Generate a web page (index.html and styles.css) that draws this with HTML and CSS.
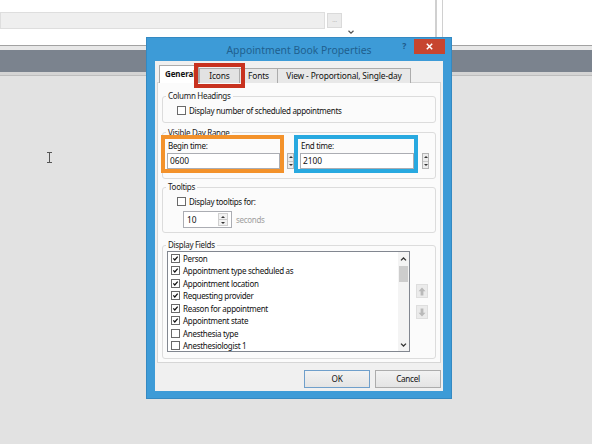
FILE: index.html
```html
<!DOCTYPE html>
<html lang="en">
<head>
<meta charset="utf-8">
<title>Appointment Book Properties</title>
<link rel="stylesheet" href="styles.css">
</head>
<body>
<div class="app">
  <div class="toolstrip">
    <div class="path-col">
      <div class="path-field"></div>
      <div class="browse-btn">…</div>
    </div>
    <div class="scroll-col">
      <svg class="chev" width="6" height="4" viewBox="0 0 6 4"><path d="M0.5 0.8 L3 3.2 L5.5 0.8" /></svg>
    </div>
    <div class="split"></div>
  </div>
  <div class="rule"></div>
  <div class="band"></div>
  <div class="band-edge"></div>
  <div class="workspace">
    <svg class="ibeam" width="5" height="11" viewBox="0 0 5 11"><path d="M0 0.5 H5 M2.5 0.5 V10.5 M0 10.5 H5" /></svg>
  </div>
</div>

<div class="dialog">
  <div class="titlebar">
    <span></span>
    <span class="title">Appointment Book Properties</span>
    <div class="controls">
      <span class="help">?</span>
      <span class="close"><svg width="7" height="7" viewBox="0 0 7 7"><path d="M0.8 0.8 L6.2 6.2 M6.2 0.8 L0.8 6.2" /></svg></span>
    </div>
  </div>

  <div class="dlg-body">
    <div class="tabs">
      <span class="tab active">General</span>
      <span class="tab flagged">Icons</span>
      <span class="tab t-fonts">Fonts</span>
      <span class="tab t-view">View - Proportional, Single-day</span>
    </div>

    <div class="panel">
      <div class="group g-cols">
        <div class="group-title">Column Headings</div>
        <div class="check-row"><span class="cb"></span><span>Display number of scheduled appointments</span></div>
      </div>

      <div class="group g-range">
        <div class="group-title">Visible Day Range</div>
        <div class="range-row">
          <div class="time-field begin mark-orange">
            <div class="field-label">Begin time:</div>
            <div class="text-box">0600</div>
          </div>
          <span class="spin s-begin"><i class="up"></i><i class="dn"></i></span>
          <div class="time-field end mark-blue">
            <div class="field-label">End time:</div>
            <div class="text-box">2100</div>
          </div>
          <span class="spin s-end"><i class="up"></i><i class="dn"></i></span>
        </div>
      </div>

      <div class="group g-tips">
        <div class="group-title">Tooltips</div>
        <div class="check-row"><span class="cb"></span><span>Display tooltips for:</span></div>
        <div class="secs-row">
          <div class="num-box"><span class="num">10</span><span class="spin inset"><i class="up"></i><i class="dn"></i></span></div>
          <span class="muted">seconds</span>
        </div>
      </div>

      <div class="group g-fields">
        <div class="group-title">Display Fields</div>
        <div class="list-row">
          <div class="listbox">
            <div class="items">
              <div class="item"><span class="cb on"><svg viewBox="0 0 9 9"><path d="M1.7 4.4 L3.6 6.4 L7.3 2.2" /></svg></span>Person</div>
              <div class="item"><span class="cb on"><svg viewBox="0 0 9 9"><path d="M1.7 4.4 L3.6 6.4 L7.3 2.2" /></svg></span>Appointment type scheduled as</div>
              <div class="item"><span class="cb on"><svg viewBox="0 0 9 9"><path d="M1.7 4.4 L3.6 6.4 L7.3 2.2" /></svg></span>Appointment location</div>
              <div class="item"><span class="cb on"><svg viewBox="0 0 9 9"><path d="M1.7 4.4 L3.6 6.4 L7.3 2.2" /></svg></span>Requesting provider</div>
              <div class="item"><span class="cb on"><svg viewBox="0 0 9 9"><path d="M1.7 4.4 L3.6 6.4 L7.3 2.2" /></svg></span>Reason for appointment</div>
              <div class="item"><span class="cb on"><svg viewBox="0 0 9 9"><path d="M1.7 4.4 L3.6 6.4 L7.3 2.2" /></svg></span>Appointment state</div>
              <div class="item"><span class="cb"></span>Anesthesia type</div>
              <div class="item"><span class="cb"></span>Anesthesiologist 1</div>
            </div>
            <div class="vscroll">
              <span class="arrow"><svg width="7" height="4" viewBox="0 0 7 4"><path d="M1 3.4 L3.5 1 L6 3.4" /></svg></span>
              <span class="track"><span class="thumb"></span></span>
              <span class="arrow"><svg width="7" height="4" viewBox="0 0 7 4"><path d="M1 0.6 L3.5 3 L6 0.6" /></svg></span>
            </div>
          </div>
          <div class="side-btns">
            <span class="side-btn"><svg width="8" height="9" viewBox="0 0 8 9"><path d="M4 0.5 L7.5 4.2 H5.4 V8.5 H2.6 V4.2 H0.5 Z" /></svg></span>
            <span class="side-btn"><svg width="8" height="9" viewBox="0 0 8 9"><path d="M4 8.5 L7.5 4.8 H5.4 V0.5 H2.6 V4.8 H0.5 Z" /></svg></span>
          </div>
        </div>
      </div>
    </div>

    <div class="btn-row">
      <span class="btn default">OK</span>
      <span class="btn">Cancel</span>
    </div>
  </div>
</div>
</body>
</html>
```

FILE: styles.css
```css
* { box-sizing: border-box; }

html, body { margin: 0; padding: 0; }

body {
  width: 592px;
  height: 444px;
  overflow: hidden;
  position: relative;
  background: #e2e2e2;
  font-family: "Noto Sans", "Liberation Sans", sans-serif;
  font-size: 8px;
  letter-spacing: -0.3px;
  color: #111;
}

/* ---------- host window behind the dialog ---------- */
.toolstrip {
  height: 45px;
  background: #fff;
  display: flex;
}

.path-col {
  width: 343px;
  display: flex;
  align-items: flex-start;
  gap: 2px;
  padding-top: 12px;
}

.path-field {
  width: 325px;
  height: 17px;
  background: #efefef;
  border: 1px solid #dedede;
}

.browse-btn {
  width: 15px;
  height: 15px;
  margin-top: 1px;
  background: #ebebeb;
  border: 1px solid #dadada;
  color: #aaa;
  font-size: 6px;
  line-height: 13px;
  text-align: center;
}

.scroll-col {
  width: 16px;
  display: flex;
  align-items: flex-end;
  justify-content: center;
  padding-bottom: 11px;
}

.chev path { fill: none; stroke: #555; stroke-width: 1.2; }

.split {
  margin-left: 76px;
  width: 8px;
  border-left: 2px solid #d0d0d0;
  border-right: 1px solid #d0d0d0;
}

.rule {
  height: 5px;
  border-top: 1px solid #a2a2a2;
  background: #e7e7e7;
}

.band {
  height: 22px;
  background: #7b838e;
}

.band-edge {
  height: 4px;
  background: #d4d4d4;
  border-bottom: 1px solid #bdbdbd;
}

.workspace {
  padding: 76px 0 0 47px;
}

.ibeam { display: block; }
.ibeam path { fill: none; stroke: #555; stroke-width: 1; }

/* ---------- dialog window ---------- */
.dialog {
  position: absolute;
  left: 147px;
  top: 38px;
  width: 304px;
  height: 360px;
  background: #3d9bd7;
  box-shadow: 0 0 0 1px #3489c2;
  display: flex;
  flex-direction: column;
  padding: 0 8px 7px;
}

.titlebar {
  height: 23px;
  margin: 0 -8px;
  display: grid;
  grid-template-columns: 1fr auto 1fr;
  align-items: center;
}

.title {
  font-size: 10.4px;
  letter-spacing: 0;
  color: #1f5f8e;
  white-space: nowrap;
}

.controls {
  justify-self: end;
  align-self: start;
  display: flex;
  align-items: flex-start;
  margin-right: 6px;
  margin-top: 1px;
}

.help {
  font-size: 8.5px;
  font-weight: bold;
  color: #1d5a8a;
  margin: 2px 8px 0 0;
  line-height: 10px;
}

.close {
  width: 31px;
  height: 15px;
  background: #c7452f;
  display: flex;
  align-items: center;
  justify-content: center;
}

.close svg { display: block; }
.close path { stroke: #fff; stroke-width: 1.5; fill: none; }

.dlg-body {
  flex: 1;
  background: #f0f0f0;
  padding: 4px 2px 2px;
  display: flex;
  flex-direction: column;
}

/* ---------- tabs ---------- */
.tabs {
  height: 18px;
  margin: 0 0 -1px 2px;
  display: flex;
  align-items: flex-end;
  position: relative;
  z-index: 1;
}

.tab {
  height: 15px;
  border: 1px solid #acacac;
  border-bottom: none;
  background: #e8e8e8;
  line-height: 13px;
  text-align: center;
  white-space: nowrap;
  overflow: hidden;
  font-size: 8.4px;
  letter-spacing: -0.15px;
}

.tab.active {
  width: 40px;
  height: 18px;
  background: #fff;
  font-weight: bold;
  font-size: 8px;
  letter-spacing: -0.1px;
  text-align: left;
  padding-left: 5px;
  line-height: 16px;
  position: relative;
  z-index: 2;
}

.tab.flagged {
  width: 41px;
  background: #e2e2e2;
  position: relative;
  z-index: 3;
  outline: 4px solid #c8321f;
  outline-offset: 1px;
}

.t-fonts { width: 39px; margin-left: -1px; }
.t-view { width: 134px; margin-left: -1px; }

/* ---------- tab page ---------- */
.panel {
  background: #fbfbfb;
  border: 1px solid #d6d6d6;
  padding: 13px 4px 3px;
}

.group {
  border: 1px solid #dcdcdc;
  border-radius: 3px;
  padding: 0 2px;
}

.group-title {
  width: max-content;
  margin: -6px 0 0 1px;
  padding: 0 2px;
  line-height: 10px;
  background: #fbfbfb;
  color: #1a1a1a;
}

.g-cols { padding-bottom: 7px; }
.g-range { margin-top: 9px; padding-bottom: 9px; }
.g-range .group-title { margin-top: -5px; }
.g-tips { margin-top: 8px; padding-bottom: 4px; }
.g-fields { margin-top: 12px; padding-bottom: 6px; }

.check-row {
  height: 10px;
  margin-top: 4px;
  padding-left: 12px;
  display: flex;
  align-items: center;
  gap: 3px;
  white-space: nowrap;
}

.cb {
  width: 9px;
  height: 9px;
  flex: none;
  border: 1px solid #6a6a6a;
  background: #fff;
  display: inline-block;
}

.cb svg { display: block; width: 7px; height: 7px; }
.cb path { fill: none; stroke: #111; stroke-width: 1.6; }

/* visible day range */
.range-row {
  height: 30px;
  margin-top: 1px;
  display: flex;
  align-items: flex-end;
}

.time-field {
  height: 30px;
  padding-left: 2px;
  display: flex;
  flex-direction: column;
}

.time-field.begin { width: 115px; }
.time-field.end { width: 116px; margin-left: 4px; }

.mark-orange { outline: 4px solid #f3922b; }
.mark-blue { outline: 4px solid #28a9e0; }

.field-label {
  height: 14px;
  line-height: 14px;
  padding-left: 1px;
}

.text-box {
  height: 16px;
  border: 1px solid #abadb3;
  background: #fff;
  padding-left: 2px;
  line-height: 14px;
  font-size: 8.4px;
  letter-spacing: 0;
}

.spin {
  width: 7px;
  height: 16px;
  border: 1px solid #b4b4b4;
  background: #ececec;
  display: flex;
  flex-direction: column;
}

.s-begin { margin-left: 7px; }
.s-end { margin-left: 8px; }

.spin i {
  flex: 1;
  display: flex;
  align-items: center;
  justify-content: center;
}

.spin i::before {
  content: "";
  border-left: 2px solid transparent;
  border-right: 2px solid transparent;
}

.spin .up::before { border-bottom: 2px solid #333; }
.spin .dn::before { border-top: 2px solid #333; }
.spin .up { border-bottom: 1px solid #c8c8c8; }

/* tooltips */
.secs-row {
  height: 17px;
  margin-top: 5px;
  padding-left: 18px;
  display: flex;
  align-items: center;
  gap: 4px;
}

.num-box {
  width: 49px;
  height: 17px;
  border: 1px solid #abadb3;
  background: #fff;
  display: flex;
  align-items: center;
  padding: 0 3px 0 3px;
}

.num { flex: 1; font-size: 8.4px; letter-spacing: 0; }

.spin.inset {
  width: 10px;
  height: 13px;
  border-color: #d0d0d0;
  background: #f2f2f2;
}

.muted { color: #a0a0a0; }

/* display fields */
.list-row {
  margin-top: 1px;
  padding-left: 2px;
  display: flex;
  align-items: flex-start;
}

.listbox {
  width: 243px;
  height: 101px;
  border: 1px solid #828790;
  background: #fff;
  display: flex;
}

.items {
  flex: 1;
  overflow: hidden;
}

.item {
  height: 12.5px;
  padding-left: 3px;
  display: flex;
  align-items: center;
  gap: 3px;
  white-space: nowrap;
}

.vscroll {
  width: 11px;
  background: #f4f4f4;
  display: flex;
  flex-direction: column;
}

.arrow {
  height: 13px;
  display: flex;
  align-items: center;
  justify-content: center;
}

.arrow path { fill: none; stroke: #333; stroke-width: 1.3; }

.track { flex: 1; padding: 1px 1px 0; }

.thumb {
  display: block;
  height: 16px;
  background: #cdcdcd;
}

.side-btns {
  margin-left: 6px;
  padding-top: 33px;
  display: flex;
  flex-direction: column;
  gap: 7px;
}

.side-btn {
  width: 12px;
  height: 14px;
  background: #ebebeb;
  border: 1px solid #dedede;
  display: flex;
  align-items: center;
  justify-content: center;
}

.side-btn path { fill: #b9b9b9; }

/* ---------- dialog buttons ---------- */
.btn-row {
  margin-top: 7px;
  display: flex;
  justify-content: flex-end;
  gap: 5px;
}

.btn {
  width: 66px;
  height: 18px;
  border: 1px solid #acacac;
  background: linear-gradient(#f2f2f2, #e4e4e4);
  text-align: center;
  line-height: 16px;
  font-size: 8.2px;
}

.btn.default { border-color: #6f9fcb; }
```
